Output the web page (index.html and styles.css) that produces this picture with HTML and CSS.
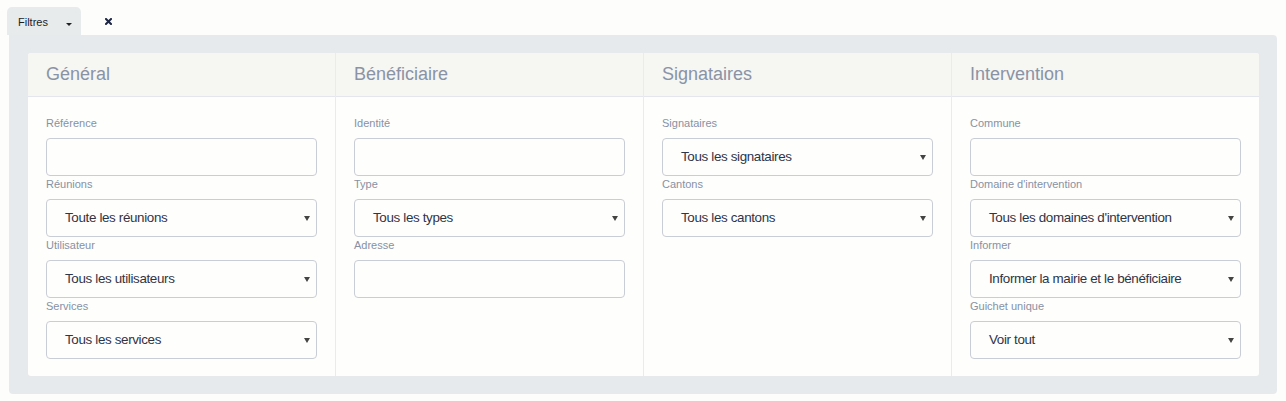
FILE: index.html
```html
<!DOCTYPE html>
<html lang="fr">
<head>
<meta charset="utf-8">
<title>Filtres</title>
<link rel="stylesheet" href="styles.css">
</head>
<body>
<div class="tabs">
  <div class="tab">
    <span class="tab-label">Filtres</span>
    <span class="tab-caret"></span>
  </div>
  <span class="close">
    <svg width="7" height="7" viewBox="0 0 7 7"><path d="M1 1 L6 6 M6 1 L1 6" stroke="#1d2643" stroke-width="2" stroke-linecap="square"/></svg>
  </span>
</div>
<div class="panel">
  <div class="card">
    <div class="col">
      <div class="col-head">Général</div>
      <div class="col-body">
        <div class="field"><div class="label">Référence</div><div class="input"></div></div>
        <div class="field"><div class="label">Réunions</div><div class="input select"><span class="val">Toute les réunions</span><span class="caret"></span></div></div>
        <div class="field"><div class="label">Utilisateur</div><div class="input select"><span class="val">Tous les utilisateurs</span><span class="caret"></span></div></div>
        <div class="field"><div class="label">Services</div><div class="input select"><span class="val">Tous les services</span><span class="caret"></span></div></div>
      </div>
    </div>
    <div class="col">
      <div class="col-head">Bénéficiaire</div>
      <div class="col-body">
        <div class="field"><div class="label">Identité</div><div class="input"></div></div>
        <div class="field"><div class="label">Type</div><div class="input select"><span class="val">Tous les types</span><span class="caret"></span></div></div>
        <div class="field"><div class="label">Adresse</div><div class="input"></div></div>
      </div>
    </div>
    <div class="col">
      <div class="col-head">Signataires</div>
      <div class="col-body">
        <div class="field"><div class="label">Signataires</div><div class="input select"><span class="val">Tous les signataires</span><span class="caret"></span></div></div>
        <div class="field"><div class="label">Cantons</div><div class="input select"><span class="val">Tous les cantons</span><span class="caret"></span></div></div>
      </div>
    </div>
    <div class="col">
      <div class="col-head">Intervention</div>
      <div class="col-body">
        <div class="field"><div class="label">Commune</div><div class="input"></div></div>
        <div class="field"><div class="label">Domaine d'intervention</div><div class="input select"><span class="val">Tous les domaines d'intervention</span><span class="caret"></span></div></div>
        <div class="field"><div class="label">Informer</div><div class="input select"><span class="val">Informer la mairie et le bénéficiaire</span><span class="caret"></span></div></div>
        <div class="field"><div class="label">Guichet unique</div><div class="input select"><span class="val">Voir tout</span><span class="caret"></span></div></div>
      </div>
    </div>
  </div>
</div>
</body>
</html>
```
FILE: styles.css
```css
* { box-sizing: border-box; }
html, body {
  margin: 0;
  padding: 0;
  background: #fdfdfb;
  font-family: "Liberation Sans", Arial, sans-serif;
}
body {
  padding: 7px 9px 0 7px;
  width: 1286px;
}
.tabs {
  display: flex;
  align-items: flex-start;
  height: 28px;
}
.tab {
  width: 74px;
  height: 28px;
  background: #e8ebec;
  border-radius: 5px 5px 0 0;
  display: flex;
  align-items: flex-start;
  padding: 9px 0 0 11px;
}
.tab-label {
  font-size: 11px;
  line-height: 13px;
  color: #1e1e1e;
}
.tab-caret {
  width: 0;
  height: 0;
  margin: 7px 0 0 18px;
  border-left: 3px solid transparent;
  border-right: 3px solid transparent;
  border-top: 3px solid #222;
}
.close {
  display: flex;
  margin: 11px 0 0 24px;
}
.panel {
  margin-left: 2px;
  width: 1268px;
  background: #e7eaec;
  border-radius: 0 4px 4px 4px;
  padding: 18px 18px 18px 19px;
}
.card {
  display: grid;
  grid-template-columns: 307px 308px 308px 308px;
  background: #fefefc;
  border-radius: 3px;
}
.col + .col {
  border-left: 1px solid #eaecec;
}
.col-head {
  height: 44px;
  background: #f6f6f3;
  border-bottom: 1px solid #e3e6ee;
  padding: 0 18px;
  font-size: 18px;
  line-height: 43px;
  color: #8993a6;
}
.col + .col .col-head,
.col + .col .col-body {
  padding-left: 18px;
}
.col:first-child .col-head { border-top-left-radius: 3px; }
.col:last-child .col-head { border-top-right-radius: 3px; }
.col-body {
  padding: 18px 18px 17px 18px;
  display: flex;
  flex-direction: column;
}
.field {
  display: flex;
  flex-direction: column;
}
.label {
  font-size: 11px;
  line-height: 16px;
  height: 16px;
  color: #8791a4;
  margin-bottom: 7px;
}
.input {
  height: 38px;
  border: 1px solid #c9cdd5;
  border-radius: 4px;
  background: #fefefc;
}
.select {
  display: flex;
  align-items: center;
  justify-content: space-between;
  padding: 0 6px 1px 18px;
}
.val {
  font-size: 13.4px;
  letter-spacing: -0.35px;
  color: #2f3447;
  white-space: nowrap;
}
.caret {
  width: 0;
  height: 0;
  border-left: 3px solid transparent;
  border-right: 3px solid transparent;
  border-top: 5px solid #444;
  margin-top: 1px;
}
```
